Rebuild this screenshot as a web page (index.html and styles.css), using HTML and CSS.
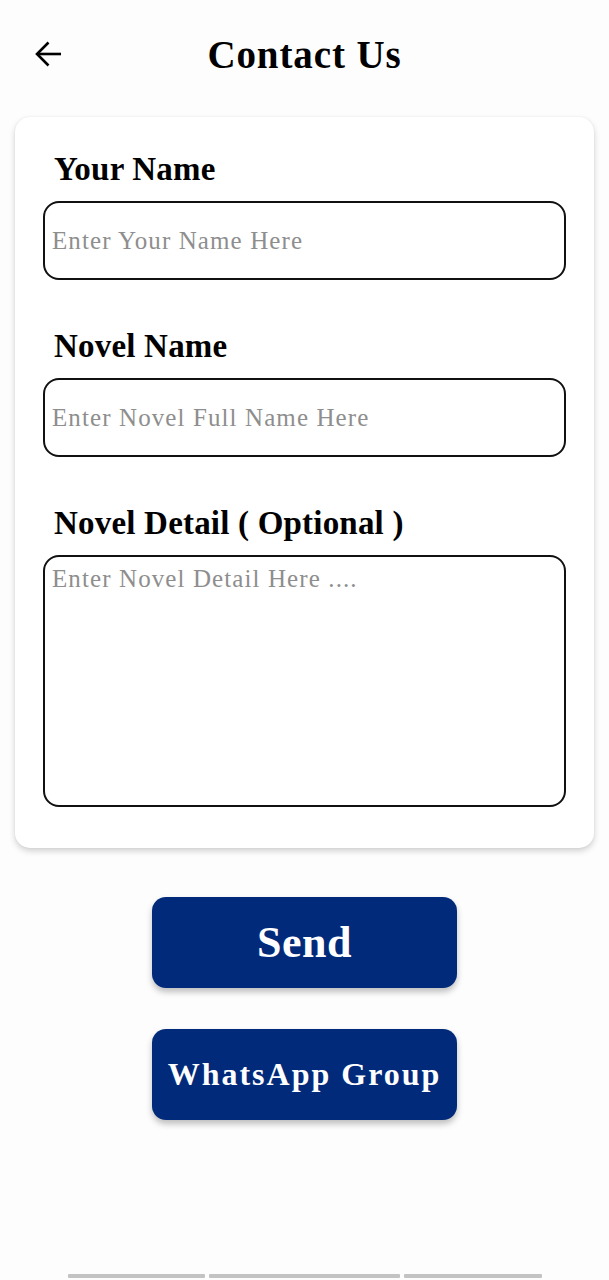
FILE: index.html
```html
<!DOCTYPE html>
<html lang="en">
<head>
<meta charset="utf-8">
<title>Contact Us</title>
<link rel="stylesheet" href="styles.css">
</head>
<body>
<div class="page">
  <header class="topbar">
    <span class="back">
      <svg width="26" height="26" viewBox="0 0 26 26" fill="none" stroke="#000" stroke-width="2.6" stroke-linecap="butt" stroke-linejoin="miter">
        <path d="M2 13H26"/>
        <path d="M13.5 1.5L2 13L13.5 24.5"/>
      </svg>
    </span>
    <h1 class="title">Contact Us</h1>
  </header>

  <section class="card">
    <label class="label">Your Name</label>
    <div class="field"><span class="ph">Enter Your Name Here</span></div>

    <label class="label">Novel Name</label>
    <div class="field"><span class="ph">Enter Novel Full Name Here</span></div>

    <label class="label">Novel Detail ( Optional )</label>
    <div class="field area"><span class="ph">Enter Novel Detail Here ....</span></div>
  </section>

  <div class="actions">
    <button class="btn btn-send">Send</button>
    <button class="btn btn-wa">WhatsApp Group</button>
  </div>

  <div class="tabs">
    <span class="tab t1"></span>
    <span class="tab t2"></span>
    <span class="tab t3"></span>
  </div>
</div>
</body>
</html>
```
FILE: styles.css
```css
* { box-sizing: border-box; }
html, body { margin: 0; padding: 0; background: #fefdfe; }
body {
  font-family: "Liberation Serif", "Times New Roman", serif;
  color: #000;
  width: 609px;
  height: 1280px;
  overflow: hidden;
}
.page { display: flex; flex-direction: column; }

.topbar {
  position: relative;
  height: 78px;
  padding-top: 31px;
  display: flex;
  justify-content: center;
}
.back {
  position: absolute;
  left: 35px;
  top: 41px;
  width: 26px;
  height: 26px;
  display: block;
}
.back svg { display: block; }
.title {
  margin: 0;
  font-size: 39px;
  line-height: 47px;
  font-weight: 700;
  letter-spacing: 0.9px;
}

.card {
  margin: 39px 15px 0 15px;
  background: #fff;
  border-radius: 15px;
  box-shadow: 0 3px 6px rgba(0,0,0,0.18), 0 0 2px rgba(0,0,0,0.06);
  padding: 32px 28px 41px 28px;
  display: flex;
  flex-direction: column;
}
.label {
  display: block;
  font-size: 33px;
  line-height: 40px;
  font-weight: 700;
  letter-spacing: 0.2px;
  padding-left: 11px;
  margin-bottom: 12px;
}
.field {
  height: 79px;
  border: 2px solid #111;
  border-radius: 16px;
  padding: 0 7px;
  display: flex;
  align-items: center;
  margin-bottom: 46px;
}
.field.area {
  height: 252px;
  align-items: flex-start;
  padding-top: 7px;
  margin-bottom: 0;
}
.ph {
  font-size: 25px;
  color: #8e8e8e;
  letter-spacing: 1.1px;
  line-height: 29px;
}

.actions {
  margin-top: 49px;
  display: flex;
  flex-direction: column;
  align-items: center;
  gap: 41px;
}
.btn {
  width: 305px;
  height: 91px;
  border: none;
  border-radius: 14px;
  background: #022a7b;
  color: #fff;
  font-family: "Liberation Serif", "Times New Roman", serif;
  font-weight: 700;
  box-shadow: 0 4px 6px rgba(0,0,0,0.25);
  padding: 0;
}
.btn-send { font-size: 44px; letter-spacing: 0.5px; }
.btn-wa { font-size: 32px; letter-spacing: 2px; }

.tabs {
  margin-top: 154px;
  display: flex;
  padding-left: 68px;
  gap: 4px;
}
.tab {
  display: block;
  height: 4px;
  background: #c3c3c3;
  border-radius: 1px;
}
.t1 { width: 137px; }
.t2 { width: 191px; }
.t3 { width: 138px; }
```
